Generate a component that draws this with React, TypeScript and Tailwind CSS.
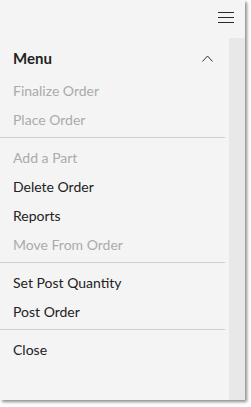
const groups = [
  [
    { label: "Finalize Order", enabled: false },
    { label: "Place Order", enabled: false },
  ],
  [
    { label: "Add a Part", enabled: false },
    { label: "Delete Order", enabled: true },
    { label: "Reports", enabled: true },
    { label: "Move From Order", enabled: false },
  ],
  [
    { label: "Set Post Quantity", enabled: true },
    { label: "Post Order", enabled: true },
  ],
  [{ label: "Close", enabled: true }],
];

export default function App() {
  return (
    <div className="w-[251px] h-[407px] bg-white" style={{ fontFamily: 'Lato, "Open Sans", sans-serif' }}>
      <div className="w-[245px] h-[400px] bg-[#f4f4f4] shadow-[2px_2px_3px_rgba(0,0,0,0.45)] flex flex-col">
        <div className="h-[38px] flex items-start justify-end pt-[12px] pr-[11px]">
          <button className="flex flex-col gap-[4px] w-[16px]">
            <span className="h-px w-full bg-[#2a2a2a]" />
            <span className="h-px w-full bg-[#2a2a2a]" />
            <span className="h-px w-full bg-[#2a2a2a]" />
          </button>
        </div>
        <div className="flex flex-1">
          <div className="flex-1 flex flex-col">
            <div className="h-[38px] pt-[2px] flex items-center justify-between pl-[13px] pr-[16px]">
              <span className="text-[15px] font-bold text-[#222]">Menu</span>
              <svg width="11" height="7" viewBox="0 0 11 7" fill="none">
                <path d="M0.5 6.5 L5.5 1 L10.5 6.5" stroke="#333" strokeWidth="1" />
              </svg>
            </div>
            {groups.map((group, gi) => (
              <div key={gi}>
                {gi > 0 && <div className="h-px bg-[#cfcfcf] mt-[3px] mb-[5px] mr-[4px]" />}
                {group.map((item) => (
                  <div
                    key={item.label}
                    className={
                      "h-[29px] flex items-center pl-[13px] text-[14px] " +
                      (item.enabled ? "text-[#222]" : "text-[#ababab]")
                    }
                  >
                    {item.label}
                  </div>
                ))}
              </div>
            ))}
          </div>
          <div className="w-[16px] bg-[#e8e8e8]" />
        </div>
      </div>
    </div>
  );
}
